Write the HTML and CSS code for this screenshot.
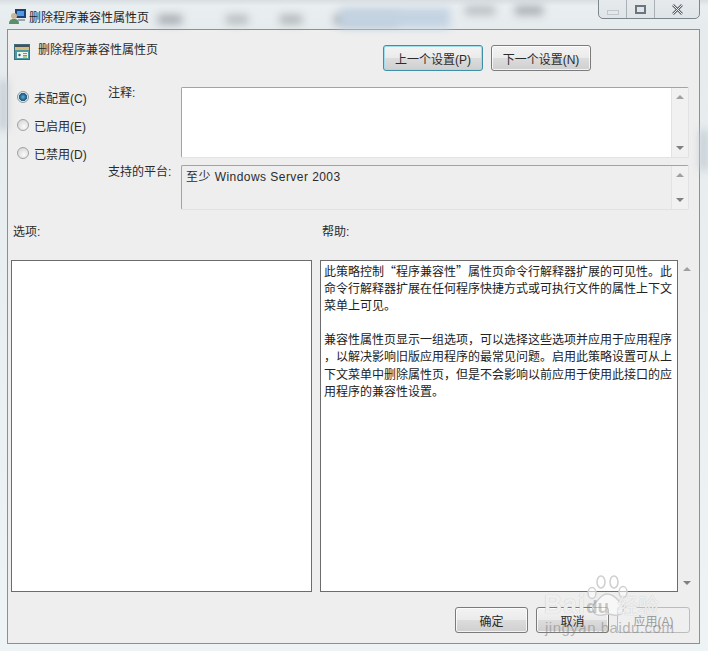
FILE: index.html
```html
<!DOCTYPE html>
<html lang="zh-CN">
<head>
<meta charset="utf-8">
<title>删除程序兼容性属性页</title>
<link rel="stylesheet" href="styles.css">
</head>
<body>
<div class="window">
  <span class="smudge s1"></span><span class="smudge s2"></span><span class="smudge s3"></span><span class="smudge s4"></span><span class="smudge s5"></span><span class="smudge s6"></span><span class="smudge s7"></span><span class="smudge s8"></span><span class="smudge s9"></span>
  <header class="titlebar">
    <svg class="title-icon" width="18" height="16" viewBox="0 0 18 16">
      <rect x="6" y="1" width="11" height="9" fill="#1c3f78"/>
      <rect x="8" y="3" width="7" height="5" fill="#4f9be0"/>
      <circle cx="5" cy="8" r="3" fill="#c9b79a"/>
      <path d="M0 16c0-4 2-5 5-5s5 1 5 5z" fill="#5a8f6a"/>
      <rect x="9" y="11" width="7" height="2" fill="#9aa5b0"/>
    </svg>
    <span class="title-text">删除程序兼容性属性页</span>
    <div class="controls">
      <span class="ctl ctl-min"><i></i></span>
      <span class="ctl ctl-max"><i></i></span>
      <span class="ctl ctl-close">
        <svg width="13" height="11" viewBox="0 0 13 11"><path d="M2 1l9 9M11 1l-9 9" stroke="#5a6670" stroke-width="2.6" fill="none"/><path d="M2 1l9 9M11 1l-9 9" stroke="#eef1f3" stroke-width="1" fill="none"/></svg>
      </span>
    </div>
  </header>
  <main class="client">
    <div class="head">
      <svg class="policy-icon" width="16" height="16" viewBox="0 0 16 16">
        <rect x="0" y="0" width="16" height="16" fill="#3e6b78"/>
        <rect x="1" y="1" width="14" height="2" fill="#4b4f58"/>
        <rect x="1" y="3" width="14" height="3" fill="#d8bd78"/>
        <rect x="1" y="6" width="14" height="9" fill="#4a9aa8"/>
        <rect x="3" y="8" width="11" height="6" fill="#f1f3ea"/>
        <circle cx="5.500" cy="11" r="1.200" fill="#2c5f6c"/>
        <path d="M9 9.500h4M9 11.500h4M9 13h4" stroke="#7fa040" stroke-width="1"/>
      </svg>
      <span class="head-title">删除程序兼容性属性页</span>
      <div class="nav">
        <button class="btn btn-focus">上一个设置(P)</button>
        <button class="btn btn-nav">下一个设置(N)</button>
      </div>
    </div>
    <section class="config">
      <div class="radios">
        <div class="radio-row"><span class="radio radio-on"></span>未配置(C)</div>
        <div class="radio-row"><span class="radio"></span>已启用(E)</div>
        <div class="radio-row"><span class="radio"></span>已禁用(D)</div>
      </div>
      <div class="field-label label-note">注释:</div>
      <div class="field field-note">
        <div class="field-body"></div>
        <div class="vscroll"><span class="arrow-up"></span><span class="arrow-down"></span></div>
      </div>
      <div class="field-label label-platform">支持的平台:</div>
      <div class="field field-platform">
        <div class="field-body platform-text">至少 Windows Server 2003</div>
        <div class="vscroll"><span class="arrow-up"></span><span class="arrow-down"></span></div>
      </div>
    </section>
    <section class="panes">
      <div class="pane-label">选项:</div>
      <div class="pane-label">帮助:</div>
      <div class="pane-spacer"></div>
      <div class="box"></div>
      <div class="box help">此策略控制“程序兼容性”属性页命令行解释器扩展的可见性。此<br>命令行解释器扩展在任何程序快捷方式或可执行文件的属性上下文<br>菜单上可见。<br><br>兼容性属性页显示一组选项，可以选择这些选项并应用于应用程序<br>，以解决影响旧版应用程序的最常见问题。启用此策略设置可从上<br>下文菜单中删除属性页，但是不会影响以前应用于使用此接口的应<br>用程序的兼容性设置。</div>
      <div class="vscroll vscroll-help"><span class="arrow-up"></span><span class="arrow-down"></span></div>
    </section>
    <footer class="footer">
      <button class="btn btn-foot">确定</button>
      <button class="btn btn-foot">取消</button>
      <button class="btn btn-foot btn-disabled">应用(A)</button>
    </footer>
  </main>
  <div class="watermark">
    <svg class="paw" width="50" height="46" viewBox="0 0 50 46">
      <g fill="#ffffff" fill-opacity=".55" stroke="#cfcfcf" stroke-width="1.500">
        <ellipse cx="9" cy="19" rx="4" ry="5.500"/>
        <ellipse cx="18" cy="8" rx="4" ry="6"/>
        <ellipse cx="31" cy="8" rx="4" ry="6"/>
        <ellipse cx="40" cy="18" rx="4" ry="5.500"/>
        <path d="M24 20c-6 0-8 6-12 9-4 4-3 11 3 12 4 1 6-1 10-1s6 2 10 1c6-1 7-8 3-12-4-3-6-9-14-9z"/>
      </g>
    </svg>
    <div class="wm-main"><span>Bai</span><span class="wm-du">du</span><span class="wm-cn">经验</span></div>
    <div class="wm-url">jingyan.baidu.com</div>
  </div>
</div>
</body>
</html>
```
FILE: styles.css
```css
* { box-sizing: border-box; }
html, body { margin: 0; padding: 0; }
body {
  width: 708px;
  height: 651px;
  overflow: hidden;
  font-family: "Liberation Sans", "Noto Sans CJK SC", sans-serif;
  font-size: 12px;
  color: #2b2b2b;
}
.window {
  position: relative;
  width: 708px;
  height: 651px;
  overflow: hidden;
  background: linear-gradient(180deg, #d9dee2 0, #e9eef0 6px, #e6ebee 29px, #eef3f5 100%);
}
.smudge { position: absolute; filter: blur(4px); display: block; }
.s1 { left: 158px; top: 15px; width: 24px; height: 9px; background: #a3aaae; }
.s2 { left: 226px; top: 15px; width: 22px; height: 9px; background: #b6bbbe; }
.s3 { left: 280px; top: 15px; width: 22px; height: 9px; background: #b0b5b8; }
.s4 { left: 334px; top: 15px; width: 64px; height: 9px; background: #a6aeb3; }
.s5 { left: 340px; top: 8px; width: 110px; height: 20px; background: #c3d3e2; }
.s6 { left: 465px; top: 6px; width: 30px; height: 9px; background: #b8bdc1; }
.s7 { left: 515px; top: 6px; width: 28px; height: 9px; background: #a6acb0; }
.s8 { left: 700px; top: 130px; width: 8px; height: 40px; background: #c2ccd4; }
.s9 { left: 0; top: 80px; width: 7px; height: 50px; background: #bfc8cf; }
.titlebar {
  position: relative;
  display: flex;
  align-items: center;
  height: 29px;
  padding: 3px 0 0 9px;
}
.title-icon { flex: none; }
.title-text { margin-left: 2px; font-size: 12px; color: #1f1f1f; }
.controls {
  position: absolute;
  left: 598px;
  top: -1px;
  display: flex;
  width: 102px;
  height: 20px;
  border: 1px solid #7d868d;
  border-radius: 0 0 5px 5px;
  background: linear-gradient(180deg, #e6eaec, #dfe5e8);
}
.ctl {
  display: flex;
  align-items: center;
  justify-content: center;
  width: 28px;
  border-right: 1px solid #aab1b6;
}
.ctl-close { flex: 1; border-right: 0; }
.ctl-min i { display: block; width: 12px; height: 5px; margin-top: 6px; border: 1px solid #c0c7cc; background: #e4e8ea; }
.ctl-max i { display: block; width: 11px; height: 9px; border: 2px solid #6b757d; background: #dfe5e8; }
.client {
  margin: 0 8px 0 7px;
  height: 615px;
  border: 1px solid #8b9094;
  background: #eeeeee;
}
.head {
  display: flex;
  align-items: flex-start;
  height: 41px;
  padding: 15px 108px 0 6px;
}
.policy-icon { flex: none; margin-top: -1px; }
.head-title { margin: -3px 0 0 8px; line-height: 16px; }
.nav { display: flex; gap: 8px; margin-left: auto; }
.btn {
  height: 26px;
  padding: 0;
  font: inherit;
  color: #2b2b2b;
  border: 1px solid #7b7b7b;
  border-radius: 3px;
  background: linear-gradient(180deg, #f3f3f3 0, #ebebeb 48%, #dcdcdc 52%, #cfcfcf 100%);
  box-shadow: inset 0 0 0 1px rgba(255,255,255,.75);
}
.btn-focus {
  width: 100px;
  border-color: #3f8fa8;
  box-shadow: inset 0 0 0 1px #9fdcec;
}
.btn-nav { width: 100px; }
.btn-foot { width: 73px; }
.btn-disabled {
  color: #9b9b9b;
  border-color: #bcbcbc;
  background: #efefef;
  box-shadow: none;
}
.config {
  display: grid;
  grid-template-columns: 90px 73px 509px;
  grid-template-rows: 71px 45px;
  row-gap: 7px;
  margin-top: 16px;
  padding-left: 9px;
}
.radios {
  grid-column: 1;
  grid-row: 1 / 3;
  display: flex;
  flex-direction: column;
  gap: 8px;
}
.radio-row { display: flex; align-items: center; gap: 5px; height: 20px; }
.radio {
  flex: none;
  width: 12px;
  height: 12px;
  border: 1px solid #a2a2a2;
  border-radius: 50%;
  background: radial-gradient(circle at 60% 65%, #fafafa, #d0d0d0);
}
.radio-on {
  border-color: #8a9aa4;
  background: radial-gradient(circle, #5fb0d8 0, #1d5f88 3.2px, #2d5f7a 3.8px, #e4eaee 4.4px);
}
.field-label { line-height: 16px; grid-column: 2; margin-left: 1px; }
.label-note { grid-row: 1; margin-top: -2px; }
.label-platform { grid-row: 2; margin-top: -1px; }
.field {
  grid-column: 3;
  margin-left: 1px;
  display: flex;
  border: 1px solid #a3a3a3;
  border-right-color: #e2e2e2;
  border-bottom-color: #e2e2e2;
  border-radius: 2px;
}
.field-note .field-body { background: #fff; }
.field-body { flex: 1; }
.platform-text { padding: 3px 4px; line-height: 16px; font-size: 12px; letter-spacing: .45px; }
.vscroll {
  position: relative;
  flex: none;
  width: 17px;
  background: #f1f1f1;
  border-left: 1px solid #e3e3e3;
}
.arrow-up, .arrow-down {
  position: absolute;
  left: 4px;
  width: 0;
  height: 0;
  border-left: 4px solid transparent;
  border-right: 4px solid transparent;
}
.arrow-up { top: 7px; border-bottom: 4px solid #a0a0a0; }
.arrow-down { bottom: 7px; border-top: 4px solid #808080; }
.panes {
  display: grid;
  grid-template-columns: 301px 358px 14px;
  grid-template-rows: 16px 332px;
  column-gap: 8px;
  row-gap: 20px;
  margin-top: 14px;
  padding-left: 3px;
}
.pane-label { padding-left: 2px; line-height: 16px; }
.box { border: 1px solid #6c6c6c; background: #fff; }
.help {
  padding: 1px 0 0 3px;
  font-family: "Noto Sans CJK SC", sans-serif;
  line-height: 17.1px;
  white-space: nowrap;
  color: #222;
}
.vscroll-help { margin-left: -8px; width: 14px; border-left: 0; background: #eeeeee; }
.vscroll-help .arrow-up, .vscroll-help .arrow-down { left: 5px; }
.footer {
  display: flex;
  justify-content: flex-end;
  gap: 8px;
  margin-top: 15px;
  padding-right: 9px;
}
.watermark {
  position: absolute;
  left: 530px;
  top: 570px;
  width: 150px;
  height: 70px;
  pointer-events: none;
}
.paw { position: absolute; left: 53px; top: 4px; }
.wm-main {
  position: absolute;
  left: 14px;
  top: 21px;
  display: flex;
  align-items: baseline;
  font-size: 25px;
  font-weight: 700;
  letter-spacing: 1px;
  color: rgba(255,255,255,.8);
  text-shadow: 0 0 1px #b4b4b4;
  line-height: 26px;
}
.wm-du { margin-left: 0; font-size: 19px; letter-spacing: 0; color: rgba(120,120,120,.4); text-shadow: none; }
.wm-cn { margin-left: 8px; font-size: 21px; font-weight: 400; letter-spacing: 0; }
.wm-url {
  position: absolute;
  left: 15px;
  top: 52px;
  font-size: 15px;
  letter-spacing: .5px;
  line-height: 12px;
  color: rgba(120,120,120,.5);
}
```
